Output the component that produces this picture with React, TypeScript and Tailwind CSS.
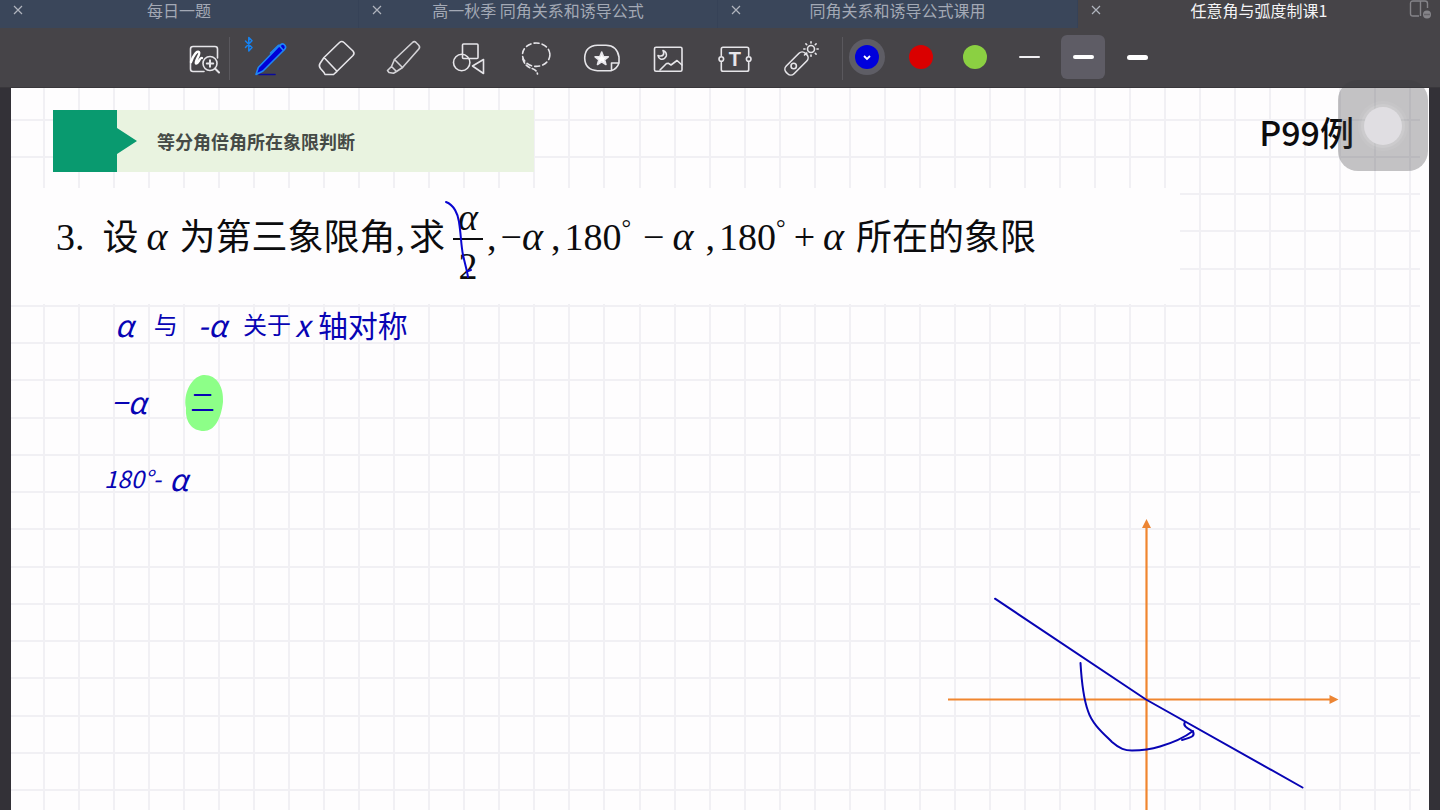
import type { ReactNode } from "react";

const tabs = [
  { title: "每日一题", active: false },
  { title: "高一秋季 同角关系和诱导公式", active: false },
  { title: "同角关系和诱导公式课用", active: false },
  { title: "任意角与弧度制课1", active: true },
];

function CloseIcon() {
  return (
    <svg width="10" height="10" viewBox="0 0 10 10" fill="none" stroke="currentColor" strokeWidth="1.2">
      <path d="M1 1 L9 9 M9 1 L1 9" />
    </svg>
  );
}

function TabBar() {
  return (
    <nav className="grid h-7 grid-cols-[359fr_359fr_360fr_362fr]" aria-label="文档">
      {tabs.map((tab) => (
        <div
          key={tab.title}
          className={
            tab.active
              ? "relative flex items-start bg-[#464448] text-[#f4f4f6]"
              : "relative flex items-start border-r border-[#364257] bg-[#3a465a] text-[#a3a9b5]"
          }
        >
          <button type="button" aria-label="关闭" className="flex h-5 w-9 shrink-0 items-center justify-center text-[#b0b4bd]">
            <CloseIcon />
          </button>
          <button type="button" className="h-5 flex-1 pr-9 text-center text-base leading-5 whitespace-nowrap">
            {tab.title}
          </button>
          {tab.active && (
            <button type="button" aria-label="窗口" className="absolute top-0 right-2 text-[#858489]">
              <svg width="24" height="20" viewBox="0 0 24 20" fill="none" stroke="currentColor" strokeWidth="1.4">
                <path d="M11 16 H5 Q2.5 16 2.5 13.500 V3.500 Q2.500 1 5 1 H17 Q19.500 1 19.500 3.500 V8 M12.500 1 V16" />
                <circle cx="19" cy="14.500" r="4" fill="currentColor" stroke="none" />
                <path d="M16.500 14.500 H21.500" stroke="#464448" strokeDasharray="1 1" />
              </svg>
            </button>
          )}
        </div>
      ))}
    </nav>
  );
}

function Tool({ label, children }: { label: string; children: ReactNode }) {
  return (
    <button type="button" aria-label={label} className="h-11 w-11 shrink-0">
      <svg
        className="overflow-visible"
        width="44"
        height="44"
        viewBox="0 0 44 44"
        fill="none"
        stroke="#e6e5e9"
        strokeWidth="1.6"
        strokeLinecap="round"
        strokeLinejoin="round"
      >
        {children}
      </svg>
    </button>
  );
}

const sunRays = [0, 45, 90, 135, 180, 225, 270, 315];

function Toolbar() {
  return (
    <div className="flex h-[60px] items-start overflow-hidden border-b border-[#39373b] bg-[#464448] pt-[7px] pl-[182px]" role="toolbar" aria-label="工具">
      <Tool label="缩放书写">
        <path d="M22 36.500 H11 Q8.500 36.500 8.500 34 V14 Q8.500 11.500 11 11.500 H33 Q35.500 11.500 35.500 14 V23" />
        <path d="M9 27 C11 21 15 15 17 17 C19 19 12 27 14 28.500 C16 29.500 18 22 20 23" strokeWidth="2.400" stroke="#fff" />
        <circle cx="28" cy="28.500" r="7" />
        <path d="M33 33.500 L37 37.500 M24.800 28.500 H31.200 M28 25.300 V31.700" strokeWidth="2" />
      </Tool>
      <div className="mt-0.5 mr-5 ml-[3px] h-[43px] w-px shrink-0 bg-[#5a585d]" />
      <div className="flex gap-[22px]">
        <Tool label="钢笔">
          <path d="M-4.500 6 L2 12.500 L-1.200 16 V2.500 L2 5.800 L-4.500 12.500" stroke="#1782f0" strokeWidth="1.500" />
          <path d="M9 39.500 H25" stroke="#0a0a9c" />
          <path d="M6 39.500 L8.300 32.500 L29 11 L31 9.500 Q33 8 35 10.500 Q36.500 12.500 34.500 14.500 L13 36 Z" fill="#0000d8" stroke="#1f86f5" />
          <path d="M20.500 18 L28.500 10.200 L30.500 11 M29.500 11 L33.500 15.500" stroke="#1f86f5" />
        </Tool>
        <Tool label="橡皮">
          <path d="M8 22.500 L23.500 7.500 Q25.700 5.500 28 7.500 L37 16 Q39 18.300 37 20.500 L21 36.300 L17.500 39.500 H9 L8 37.500 L4.500 33.500 Q2.500 31 4 28.500 Z M8 22.500 L21 36.300" />
        </Tool>
        <Tool label="荧光笔">
          <g stroke="#d3d2d6">
            <path d="M12.500 24.500 L30.500 7.500 Q32.500 5.500 34.500 8 L36.500 10 Q38.500 12 36.800 14 L20.500 32.500 Z" />
            <path d="M12.500 24.500 L9.500 31.500 L14.500 36.500 L20.500 32.500 M9.500 31.500 L5.500 35.500 L7 37.500 L11.500 38.300 L14.500 36.500" />
          </g>
        </Tool>
        <Tool label="图形">
          <rect x="14.500" y="9" width="15.500" height="14.500" rx="1" />
          <circle cx="13.700" cy="27.500" r="8.200" />
          <path d="M24.500 31 L35.500 24.500 V38.500 Z" />
        </Tool>
        <Tool label="套索">
          <ellipse cx="22.200" cy="19.700" rx="13.700" ry="11.700" strokeDasharray="5 3.200" />
          <path d="M8.800 24 C11 31 15 32.500 18 33.500 C22 35 23 36.500 23.500 39" strokeDasharray="4.500 2.500" />
        </Tool>
        <Tool label="贴纸">
          <path d="M39 28 V22 Q37 10.500 26 10.300 H17.500 Q5 11 4.700 23 Q5 35 17.500 35.700 H31 Q37 34 39 28 H31.500 V35.500" />
          <path d="M21.700 17 L23.500 21.600 L28.300 21.800 L24.600 24.800 L25.900 29.500 L21.700 26.800 L17.500 29.500 L18.800 24.800 L15.100 21.800 L19.900 21.600 Z" fill="#fff" />
        </Tool>
        <Tool label="图片">
          <rect x="8.500" y="12.300" width="27.500" height="24" rx="1.500" />
          <path d="M17 15.500 Q21 17 20.300 21 Q18.500 25 14.500 24 Q12.300 23 12 20.500 Q16 22 17.500 19.500 Q18 17.500 17 15.500 Z" />
          <path d="M14 35 L20.500 28.500 L22.500 28.300 L25 30 L31 25.500 L36 30" />
        </Tool>
        <Tool label="文本">
          <path d="M9.300 20.500 V14 Q9.300 12.300 11 12.300 H35 Q36.700 12.300 36.700 14 V20.500 M9.300 27.500 V34.500 Q9.300 36.300 11 36.300 H35 Q36.700 36.300 36.700 34.500 V27.500" />
          <circle cx="9.300" cy="24" r="2.300" />
          <circle cx="36.700" cy="24" r="2.300" />
          <text x="22.800" y="31" textAnchor="middle" fontFamily="Liberation Sans, sans-serif" fontWeight="700" fontSize="20" fill="#e6e5e9" stroke="none">T</text>
        </Tool>
        <Tool label="激光笔">
          <rect x="5" y="23" width="27" height="11" rx="4.500" transform="rotate(-45 18.500 28.500)" />
          <circle cx="15.700" cy="31" r="2.700" />
          <path d="M26.500 20 L28.500 18" />
          <circle cx="33" cy="14" r="3.500" />
          {sunRays.map((angle) => (
            <path key={angle} d="M33 8 V6.800" transform={`rotate(${angle} 33 14)`} />
          ))}
        </Tool>
      </div>
      <div className="mt-0.5 mr-0.5 ml-5 h-[43px] w-px shrink-0 bg-[#5a585d]" />
      <div className="flex gap-[10px]">
        <button type="button" aria-label="蓝色" className="flex h-11 w-11 items-center justify-center">
          <span className="flex h-9 w-9 items-center justify-center rounded-full bg-[#5e5d65]">
            <span className="flex h-6 w-6 items-center justify-center rounded-full bg-[#0000dc]">
              <svg width="10" height="10" viewBox="0 0 10 10" fill="none" stroke="#fff" strokeWidth="1.800">
                <path d="M2 4 L5 7 L8 4" />
              </svg>
            </span>
          </span>
        </button>
        <button type="button" aria-label="红色" className="flex h-11 w-11 items-center justify-center">
          <span className="h-6 w-6 rounded-full bg-[#da0000]" />
        </button>
        <button type="button" aria-label="绿色" className="flex h-11 w-11 items-center justify-center">
          <span className="h-6 w-6 rounded-full bg-[#8bd042]" />
        </button>
        <button type="button" aria-label="细" className="flex h-11 w-11 items-center justify-center rounded-md">
          <span className="h-0.5 w-[21px] rounded-full bg-[#f0eff2]" />
        </button>
        <button type="button" aria-label="中" aria-pressed="true" className="flex h-11 w-11 items-center justify-center rounded-md bg-[#5e5c65]">
          <span className="h-1 w-[21px] rounded-full bg-white" />
        </button>
        <button type="button" aria-label="粗" className="flex h-11 w-11 items-center justify-center rounded-md">
          <span className="h-[5px] w-[21px] rounded-full bg-white" />
        </button>
      </div>
    </div>
  );
}

const columns = Array.from({ length: 40 }, (_, i) => Math.round(32 + i * 35.03));
const rows = Array.from({ length: 40 }, (_, i) => Math.round(30.5 + i * 37.26));

function GridLayer() {
  return (
    <svg className="absolute top-0 left-0 h-full w-full" aria-hidden="true">
      <g fill="#f1f0f4">
        {columns.map((x) => (
          <rect key={x} x={x} y="0" width="2" height="100%" />
        ))}
        {rows.map((y) => (
          <rect key={y} x="0" y={y} width="1409" height="2" />
        ))}
      </g>
      <rect x="0" y="100" width="1169" height="116" fill="#fefdfe" />
      <path d="M192 287 C205 286 213 298 212 314 C210 332 203 343 193 343 C181 343 174 334 175 320 C172 306 180 289 192 287 Z" fill="#8dff88" />
    </svg>
  );
}

function InkLayer() {
  return (
    <svg className="pointer-events-none absolute top-0 left-0 h-full w-full" aria-hidden="true">
      <g transform="translate(-11 -88)" fill="none" strokeLinecap="round" strokeLinejoin="round">
        <path d="M948 699.500 H1332 M1146.500 525 V1600" stroke="#f0862f" strokeWidth="2.200" strokeLinecap="butt" />
        <path d="M1338.500 699.500 L1329.500 695 V704 Z M1146.500 519 L1142 528 H1151 Z" fill="#ec8534" />
        <g stroke="#0804b4" strokeWidth="2">
          <path d="M995 598.700 L1146 699.500 L1302.500 787.500" />
          <path d="M1080.500 663 C1081.500 680 1084 700 1088 711 C1092 724 1104 734 1112 742 C1120 749 1125 750.500 1132 750.500 C1142 750.500 1152 749 1160 746.500 C1172 743 1185 737 1193 731" />
          <path d="M1185 722 C1182 726 1189 729 1193 731.500 C1195 736 1193 737 1182 740" />
        </g>
        <path d="M446 202 C454 205 458 214 459 222 C461 234 461 245 463 255 C465 264 467 270 468 277 M468 271 L471 270" stroke="#0a06d0" strokeWidth="2" />
      </g>
    </svg>
  );
}

function Alpha({ className = "" }: { className?: string }) {
  return <i className={`font-['Liberation_Serif',serif] text-[40px] leading-[44px] ${className}`}>α</i>;
}

const cjk = "text-[36px] leading-[44px]";
const serif = "font-['Liberation_Serif',serif] text-[38px] leading-[44px]";

function Degrees180({ className = "" }: { className?: string }) {
  return (
    <span className={`${serif} ${className}`}>
      180<span className="align-super text-2xl leading-none">°</span>
    </span>
  );
}

function Problem() {
  return (
    <section className="h-[116px] pt-6 pl-[45px]">
      <div className="flex h-11 items-baseline whitespace-nowrap text-[#0c0c0e]">
        <span className={serif}>3.</span>
        <span className={`ml-[18px] ${cjk}`}>设</span>
        <Alpha className="ml-2" />
        <span className={`ml-3 ${cjk}`}>为第三象限角</span>
        <span className={serif}>,</span>
        <span className={`ml-1 ${cjk}`}>求</span>
        <span className="relative ml-2 h-11 w-[30px] self-start">
          <span className="absolute -top-4 left-0 flex w-full flex-col items-center">
            <i className="flex h-11 w-full items-center justify-center border-b-2 border-[#0c0c0e] font-['Liberation_Serif',serif] text-[38px] leading-[38px]">α</i>
            <span className="font-['Liberation_Serif',serif] text-[38px] leading-[52px]">2</span>
          </span>
        </span>
        <span className={`ml-1 ${serif}`}>,</span>
        <span className={`ml-1 ${serif}`}>−</span>
        <Alpha />
        <span className={`ml-2 ${serif}`}>,</span>
        <Degrees180 className="ml-1" />
        <span className={`ml-3 ${serif}`}>−</span>
        <Alpha className="ml-2" />
        <span className={`ml-3 ${serif}`}>,</span>
        <Degrees180 className="ml-1" />
        <span className={`ml-2 ${serif}`}>+</span>
        <Alpha className="ml-2" />
        <span className={`ml-3 ${cjk}`}>所在的象限</span>
      </div>
    </section>
  );
}

function Notes() {
  return (
    <section className="flex flex-col gap-[37px] text-2xl leading-10 whitespace-nowrap text-[#0804b4]">
      <p className="flex h-10 items-center pl-[104px]">
        <i className="text-3xl">α</i>
        <span className="ml-5">与</span>
        <i className="ml-5 text-3xl">-α</i>
        <span className="ml-4">关于</span>
        <i className="ml-1 text-3xl">x</i>
        <span className="ml-2 text-3xl">轴对称</span>
      </p>
      <p className="flex h-10 items-center pl-[100px]">
        <i className="text-3xl">−α</i>
        <span className="ml-11">二</span>
      </p>
      <p className="flex h-10 items-center pl-[93px]">
        <i>180°</i>
        <i>-</i>
        <i className="ml-2 text-3xl">α</i>
      </p>
    </section>
  );
}

export default function App() {
  return (
    <div className="relative flex min-h-screen flex-col overflow-x-hidden bg-[#333137] font-['Noto_Sans_CJK_SC',sans-serif]">
      <TabBar />
      <Toolbar />
      <main className="relative mx-[11px] flex-1 overflow-hidden bg-[#fefdfe]">
        <GridLayer />
        <div className="relative flex flex-col pt-[22px]">
          <header className="flex items-start justify-between pr-[75px] pl-[42px]">
            <div className="flex h-[62px] w-[481px] items-center bg-[#e9f3e0]">
              <svg className="shrink-0" width="84" height="62" viewBox="0 0 84 62" aria-hidden="true">
                <path d="M0 0 H64 V18 L84 31 L64 44 V62 H0 Z" fill="#099a6f" />
              </svg>
              <h1 className="pl-5 text-lg font-bold text-[#454a46]">等分角倍角所在象限判断</h1>
            </div>
            <p className="text-[34px] leading-[44px] font-medium text-[#0c0c0e]">P99例</p>
          </header>
          <div className="mt-4">
            <Problem />
          </div>
          <Notes />
        </div>
        <InkLayer />
      </main>
      <button
        type="button"
        aria-label="辅助触控"
        className="absolute top-20 right-3 flex h-[91px] w-[90px] items-center justify-center rounded-[20px] bg-[#3c3a40]/30"
      >
        <span className="flex h-[50px] w-[50px] items-center justify-center rounded-full bg-white/5">
          <span className="flex h-11 w-11 items-center justify-center rounded-full bg-white/10">
            <span className="h-[38px] w-[38px] rounded-full bg-[#e0dee2]" />
          </span>
        </span>
      </button>
    </div>
  );
}
